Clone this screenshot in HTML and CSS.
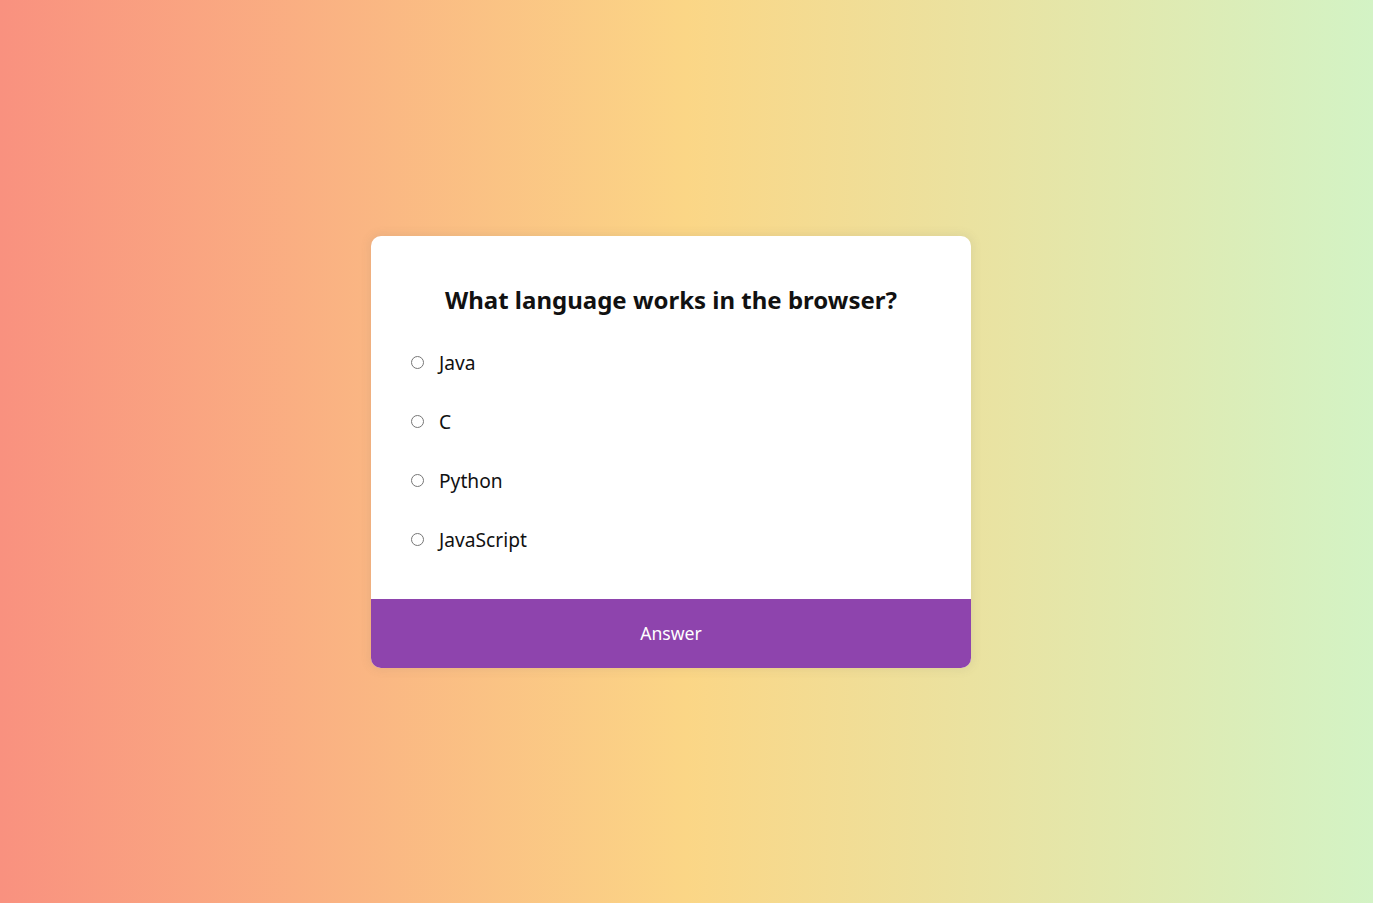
FILE: index.html
```html
<!DOCTYPE html>
<html lang="en">
<head>
<meta charset="UTF-8">
<title>Quiz</title>
<link rel="stylesheet" href="styles.css">
</head>
<body>
<div class="quiz">
  <div class="quiz-header">
    <h2 class="question">What language works in the browser?</h2>
    <ul class="answers">
      <li class="answer"><input type="radio" name="answer" id="a"><label for="a">Java</label></li>
      <li class="answer"><input type="radio" name="answer" id="b"><label for="b">C</label></li>
      <li class="answer"><input type="radio" name="answer" id="c"><label for="c">Python</label></li>
      <li class="answer"><input type="radio" name="answer" id="d"><label for="d">JavaScript</label></li>
    </ul>
  </div>
  <button class="submit">Answer</button>
</div>
</body>
</html>
```
FILE: styles.css
```css
* { box-sizing: border-box; }
html, body { height: 100%; }
body {
  margin: 0;
  font-family: "Noto Sans", "Open Sans", sans-serif;
  background: linear-gradient(to right, #f9917f 0%, #fbd686 50%, #d3f3c5 100%);
  display: flex;
  align-items: center;
  justify-content: center;
  padding-right: 31px;
}
.quiz {
  width: 600px;
  background: #fff;
  border-radius: 10px;
  box-shadow: 0 0 10px 2px rgba(100, 100, 100, 0.1);
  overflow: hidden;
}
.quiz-header {
  padding: 47px 40px 30px;
}
.question {
  margin: 0 0 17px;
  text-align: center;
  font-size: 24px;
  font-weight: 700;
  color: #111;
  line-height: 33px;
}
.answers {
  list-style: none;
  margin: 0;
  padding: 0;
}
.answer {
  display: flex;
  align-items: center;
  height: 59px;
  font-size: 19.2px;
  color: #111;
}
.answer input {
  margin: 0 15px 0 0;
  width: 13px;
  height: 13px;
}
.answer label { cursor: pointer; }
.submit {
  display: block;
  width: 100%;
  height: 69px;
  border: none;
  background: #8e44ad;
  color: #fff;
  font-family: inherit;
  font-size: 17.6px;
  cursor: pointer;
  padding: 0;
}
```
